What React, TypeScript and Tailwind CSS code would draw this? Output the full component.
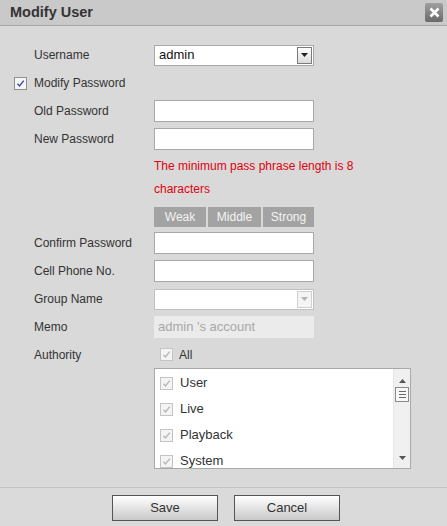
import React from "react";

const font = { fontFamily: '"Liberation Sans", Arial, sans-serif' };

const Check = ({ disabled }: { disabled?: boolean }) => (
  <span
    className={`inline-flex shrink-0 w-[13px] h-[13px] items-center justify-center border ${
      disabled ? "border-[#c4c4c4] bg-[#f4f4f4]" : "border-[#8e8f8f] bg-[#f6f6f6]"
    }`}
  >
    <svg width="9" height="9" viewBox="0 0 9 9">
      <path
        d="M1.5 4.8 L3.5 7 L7.8 1.6"
        fill="none"
        stroke={disabled ? "#b8b8b8" : "#3a4fa0"}
        strokeWidth="1.4"
      />
    </svg>
  </span>
);

const Row = ({ label, children }: { label: string; children?: React.ReactNode }) => (
  <div className="flex h-[28px] shrink-0 items-center">
    <div className="w-[120px] pl-[34px] box-content text-[#333]">{label}</div>
    {children}
  </div>
);

const TextBox = () => (
  <div className="w-[160px] h-[22px] border border-[#a9a9a9] bg-white" />
);

const Arrow = ({ color }: { color: string }) => (
  <svg width="7" height="4" viewBox="0 0 7 4">
    <path d="M0 0 L7 0 L3.5 4 Z" fill={color} />
  </svg>
);

export default function App() {
  return (
    <div className="w-[447px] h-[526px] flex flex-col bg-[#d9d9d9] text-[12px]" style={font}>
      {/* Title */}
      <div className="h-[26px] shrink-0 flex items-center justify-between bg-[#c9c9c9] border-b border-[#a6a6a6] pl-[10px] pr-[4px]">
        <span className="text-[14.5px] font-bold text-[#333]">Modify User</span>
        <button className="w-[18px] h-[19px] flex items-center justify-center rounded-[2px] bg-gradient-to-b from-[#a0a0a0] to-[#6a6a6a]">
          <svg width="11" height="11" viewBox="0 0 11 11">
            <path d="M1.5 1.5 L9.5 9.5 M9.5 1.5 L1.5 9.5" stroke="white" strokeWidth="2.6" />
          </svg>
        </button>
      </div>

      {/* Form */}
      <div className="flex-1 flex flex-col pt-[15px]">
        <Row label="Username">
          <div className="w-[160px] h-[21px] flex items-center border border-[#a9a9a9] bg-white">
            <span className="flex-1 pl-[4px] text-[13px] text-[#111]">admin</span>
            <span className="w-[15px] h-[17px] mr-[1px] flex items-center justify-center border border-[#7a7a7a] bg-gradient-to-b from-white to-[#dcdcdc]">
              <Arrow color="#222" />
            </span>
          </div>
        </Row>
        <div className="flex h-[28px] shrink-0 items-center pl-[14px] gap-[7px] text-[#333]">
          <Check />
          <span>Modify Password</span>
        </div>
        <Row label="Old Password">
          <TextBox />
        </Row>
        <Row label="New Password">
          <TextBox />
        </Row>
        <div className="pl-[154px] pt-[2px] leading-[23px] text-[#e1000f]">
          <div>The minimum pass phrase length is 8</div>
          <div>characters</div>
        </div>
        <div className="ml-[154px] mt-[6px] w-[160px] h-[20px] shrink-0 flex gap-[2px] text-[#f4f4f4]">
          <div className="w-[52px] bg-[#a3a3a3] flex items-center justify-center">Weak</div>
          <div className="w-[53px] bg-[#a3a3a3] flex items-center justify-center">Middle</div>
          <div className="flex-1 bg-[#a3a3a3] flex items-center justify-center">Strong</div>
        </div>
        <div className="h-[2px] shrink-0" />
        <Row label="Confirm Password">
          <TextBox />
        </Row>
        <Row label="Cell Phone No.">
          <TextBox />
        </Row>
        <Row label="Group Name">
          <div className="w-[160px] h-[21px] flex items-center border border-[#c0c0c0] bg-white">
            <span className="flex-1" />
            <span className="w-[15px] h-[17px] mr-[1px] flex items-center justify-center border border-[#cfcfcf] bg-[#f4f4f4]">
              <Arrow color="#b5b5b5" />
            </span>
          </div>
        </Row>
        <Row label="Memo">
          <div className="w-[160px] h-[22px] flex items-center pl-[4px] bg-[#ebebeb] text-[13px] text-[#a8a8a8]">
            admin 's account
          </div>
        </Row>
        <div className="flex h-[27px] shrink-0 items-center">
          <div className="w-[120px] pl-[34px] box-content text-[#333]">Authority</div>
          <div className="flex items-center gap-[6px] pl-[6px] text-[#333]">
            <Check disabled />
            <span>All</span>
          </div>
        </div>
        <div className="ml-[154px] w-[257px] h-[101px] shrink-0 flex border border-[#a9a9a9] bg-white">
          <div className="flex-1 flex flex-col pt-[1px] overflow-hidden text-[13px] text-[#333]">
            {["User", "Live", "Playback", "System"].map((t) => (
              <div key={t} className="h-[26px] shrink-0 flex items-center gap-[7px] pl-[5px]">
                <Check disabled />
                <span>{t}</span>
              </div>
            ))}
          </div>
          <div className="w-[17px] flex flex-col items-center bg-[#f0f0f0] border-l border-[#e6e6e6]">
            <div className="h-[14px] flex items-end">
              <svg width="7" height="4" viewBox="0 0 7 4">
                <path d="M0 4 L7 4 L3.5 0 Z" fill="#555" />
              </svg>
            </div>
            <div className="mt-[4px] w-[14px] h-[15px] flex flex-col items-center justify-center gap-[2px] border border-[#8a8a8a] bg-[#f7f7f7]">
              <span className="w-[7px] h-px bg-[#666]" />
              <span className="w-[7px] h-px bg-[#666]" />
              <span className="w-[7px] h-px bg-[#666]" />
            </div>
            <div className="flex-1" />
            <div className="h-[12px] flex items-start">
              <Arrow color="#555" />
            </div>
          </div>
        </div>
      </div>

      {/* Footer */}
      <div className="h-[39px] shrink-0 flex items-center justify-center gap-[16px] pl-[5px] pt-[2px] border-t border-[#c2c2c2] bg-[#dadada]">
        <button className="w-[106px] h-[26px] border border-[#555] bg-gradient-to-b from-white to-[#c9c9c9] text-[13px] text-[#333]">
          Save
        </button>
        <button className="w-[106px] h-[26px] border border-[#555] bg-gradient-to-b from-white to-[#c9c9c9] text-[13px] text-[#333]">
          Cancel
        </button>
      </div>
    </div>
  );
}
